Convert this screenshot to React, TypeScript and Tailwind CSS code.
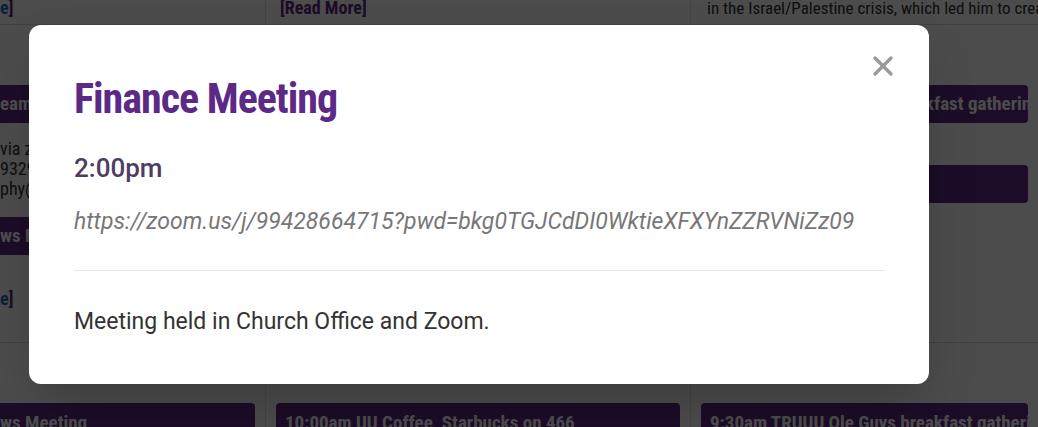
import { X } from "lucide-react";

const cond = "font-['Roboto_Condensed','Roboto',sans-serif]";
const body = "font-['Roboto','Liberation_Sans',sans-serif]";

const Bar = ({ text, className = "" }: { text: string; className?: string }) => (
  <div
    className={`bg-[#5e2b87] text-white rounded-[4px] px-[9px] h-[38px] flex items-center text-[19px] font-bold whitespace-nowrap overflow-hidden ${cond} ${className}`}
  >
    {text}
  </div>
);

const Calendar = () => {
  return (
    <div className={`bg-white w-[1038px] h-[427px] overflow-hidden ${cond}`}>
      {/* top row */}
      <div className="grid grid-cols-[266px_425px_1fr] h-[25px] border-b border-[#d6d6d6]">
        <div className="border-r border-[#e4e4e4] text-[18px] leading-[16px] text-[#5e2b87] font-bold">
          <span className="text-[#2a66c9]">e</span>]
        </div>
        <div className="border-r border-[#e4e4e4] pl-[14px] text-[18px] leading-[16px] text-[#5e2b87] font-bold">
          [Read More]
        </div>
        <div className="pl-[16px] text-[17px] leading-[16px] text-[#333] whitespace-nowrap overflow-hidden">
          in the Israel/Palestine crisis, which led him to create
        </div>
      </div>
      {/* middle row */}
      <div className="grid grid-cols-[266px_425px_1fr] h-[318px] border-b border-[#d6d6d6]">
        <div className="border-r border-[#e4e4e4] pt-[60px] pr-[10px] overflow-hidden">
          <Bar text="eam Meeting" className="rounded-l-none pl-0" />
          <div className="text-[18px] leading-[20px] text-[#333] mt-[16px] whitespace-nowrap">
            <p>via zoom</p>
            <p>9329 5581</p>
            <p>phy@gmail.com</p>
          </div>
          <Bar text="ws Meeting" className="rounded-l-none pl-0 mt-[18px]" />
          <div className="text-[18px] leading-[20px] font-bold text-[#5e2b87] mt-[34px]">
            <span className="text-[#2a66c9]">e</span>]
          </div>
        </div>
        <div className="border-r border-[#e4e4e4]" />
        <div className="pt-[60px] px-[10px] overflow-hidden">
          <Bar text="9:30am TRUUU Ole Guys breakfast gathering" className="pl-0" />
          <Bar text="" className="mt-[42px]" />
        </div>
      </div>
      {/* bottom row */}
      <div className="grid grid-cols-[266px_425px_1fr] h-[84px]">
        <div className="border-r border-[#e4e4e4] pt-[60px] pr-[10px] overflow-hidden">
          <Bar text="ws Meeting" className="rounded-l-none pl-0 items-start pt-[6px]" />
        </div>
        <div className="border-r border-[#e4e4e4] pt-[60px] px-[10px]">
          <Bar text="10:00am UU Coffee, Starbucks on 466" className="items-start pt-[6px]" />
        </div>
        <div className="pt-[60px] px-[10px] overflow-hidden">
          <Bar text="9:30am TRUUU Ole Guys breakfast gathering" className="items-start pt-[6px]" />
        </div>
      </div>
    </div>
  );
};

export default function App() {
  return (
    <div className="relative w-[1038px] h-[427px] overflow-hidden">
      <Calendar />
      <div className="absolute inset-0 bg-black/70 pl-[29px] pt-[25px]">
        <div className="relative w-[900px] h-[359px] bg-white rounded-[12px] shadow-2xl px-[45px] pt-[49px]">
          <button className="absolute top-[25px] right-[30px] text-[#9a9a9a] block leading-none">
            <X size={32} strokeWidth={2.5} className="block" />
          </button>
          <h1 className={`text-[42px] leading-[50px] font-bold tracking-[-1px] text-[#5c2a86] ${cond}`}>
            Finance Meeting
          </h1>
          <div className={`mt-[28px] text-[26px] leading-[32px] font-medium text-[#4f3d61] ${body}`}>
            2:00pm
          </div>
          <div className={`mt-[24px] text-[23px] leading-[28px] italic text-[#777] ${body}`}>
            https://zoom.us/j/99428664715?pwd=bkg0TGJCdDI0WktieXFXYnZZRVNiZz09
          </div>
          <div className="mt-[34px] border-t border-[#e5e5e5] w-[811px]" />
          <p className={`mt-[37px] text-[23px] leading-[28px] text-[#333] ${body}`}>
            Meeting held in Church Office and Zoom.
          </p>
        </div>
      </div>
    </div>
  );
}
